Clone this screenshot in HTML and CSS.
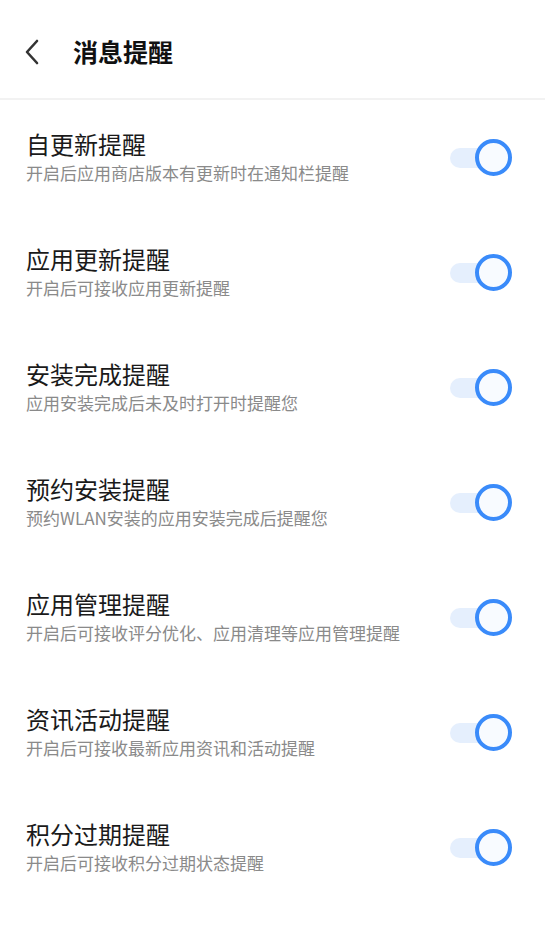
FILE: index.html
```html
<!DOCTYPE html>
<html lang="zh-CN">
<head>
    <meta charset="UTF-8">
    <meta name="viewport" content="width=device-width, initial-scale=1.0">
    <title>消息提醒</title>
    <link rel="stylesheet" href="styles.css">
</head>
<body>

<!-- 顶栏 -->
<div class="header">
    <svg class="back" width="16" height="26" viewBox="0 0 16 26">
        <path d="M13 2 L3 13 L13 24" fill="none" stroke="#333" stroke-width="2.6" stroke-linecap="round" stroke-linejoin="round"/>
    </svg>
    <div class="title">消息提醒</div>
</div>

<!-- 设置列表 -->
<div class="list">
    <div class="row">
        <div class="text">
            <div class="name">自更新提醒</div>
            <div class="desc">开启后应用商店版本有更新时在通知栏提醒</div>
        </div>
        <div class="switch"><span class="knob"></span></div>
    </div>
    <div class="row">
        <div class="text">
            <div class="name">应用更新提醒</div>
            <div class="desc">开启后可接收应用更新提醒</div>
        </div>
        <div class="switch"><span class="knob"></span></div>
    </div>
    <div class="row">
        <div class="text">
            <div class="name">安装完成提醒</div>
            <div class="desc">应用安装完成后未及时打开时提醒您</div>
        </div>
        <div class="switch"><span class="knob"></span></div>
    </div>
    <div class="row">
        <div class="text">
            <div class="name">预约安装提醒</div>
            <div class="desc">预约WLAN安装的应用安装完成后提醒您</div>
        </div>
        <div class="switch"><span class="knob"></span></div>
    </div>
    <div class="row">
        <div class="text">
            <div class="name">应用管理提醒</div>
            <div class="desc">开启后可接收评分优化、应用清理等应用管理提醒</div>
        </div>
        <div class="switch"><span class="knob"></span></div>
    </div>
    <div class="row">
        <div class="text">
            <div class="name">资讯活动提醒</div>
            <div class="desc">开启后可接收最新应用资讯和活动提醒</div>
        </div>
        <div class="switch"><span class="knob"></span></div>
    </div>
    <div class="row">
        <div class="text">
            <div class="name">积分过期提醒</div>
            <div class="desc">开启后可接收积分过期状态提醒</div>
        </div>
        <div class="switch"><span class="knob"></span></div>
    </div>
</div>

</body>
</html>
```

FILE: styles.css
```css
:root {
    --text-color: #1a1a1a;
    --sub-color: #8a8a8a;
    --blue: #3a8bfa;
    --track: #e5effd;
    --line: #f2f2f2;
}

body {
    margin: 0;
    background: #fff;
    font-family: "Noto Sans CJK SC", "Noto Sans", sans-serif;
    color: var(--text-color);
}

/* Header */
.header {
    height: 98px;
    display: flex;
    align-items: center;
    padding-left: 24px;
    border-bottom: 2px solid var(--line);
    box-sizing: content-box;
}

.back {
    margin-top: 5px;
}

.title {
    margin-left: 33px;
    margin-top: 4px;
    font-size: 25px;
    font-weight: bold;
    color: #111;
    line-height: 32px;
}

/* List */
.row {
    height: 115px;
    display: flex;
    align-items: center;
    justify-content: space-between;
    padding: 0 33px 0 26px;
}

.text {
    padding-bottom: 3px;
}

.name {
    font-size: 24px;
    line-height: 32px;
}

.desc {
    margin-top: 1px;
    font-size: 17px;
    line-height: 24px;
    color: var(--sub-color);
}

/* Switch */
.switch {
    position: relative;
    width: 62px;
    height: 37px;
    display: flex;
    align-items: center;
}

.switch::before {
    content: "";
    width: 42px;
    height: 20px;
    border-radius: 10px;
    background: var(--track);
}

.knob {
    position: absolute;
    top: 0;
    right: 0;
    width: 29px;
    height: 29px;
    border: 4px solid var(--blue);
    border-radius: 50%;
    background: #f8fbff;
}
```
